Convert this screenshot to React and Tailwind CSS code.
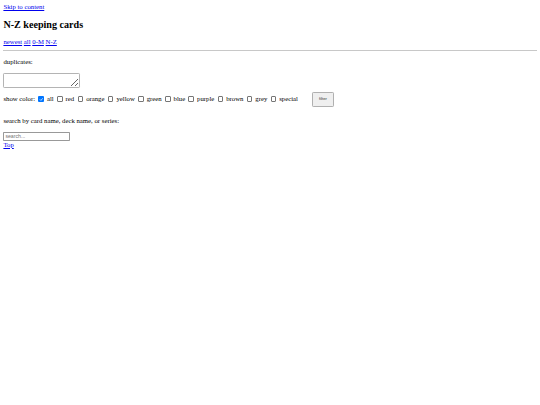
const Box = ({ checked }) =>
  checked ? (
    <span className="ml-[3.3px] mr-[3px] w-[5.6px] h-[5.6px] rounded-[1px] bg-[#0075ff] flex items-center justify-center">
      <svg viewBox="0 0 10 10" className="w-[4.6px] h-[4.6px]">
        <path d="M2 5.2 L4.2 7.4 L8.2 2.8" fill="none" stroke="#fff" strokeWidth="1.6" />
      </svg>
    </span>
  ) : (
    <span className="ml-[3.3px] mr-[3px] w-[5.6px] h-[5.6px] rounded-[1px] border-[0.6px] border-[#767676] bg-white" />
  );

export default function App() {
  const colors = ['red', 'orange', 'yellow', 'green', 'blue', 'purple', 'brown', 'grey', 'special'];
  return (
    <div className="min-h-[405px] bg-white p-[3.4px] text-[6.75px] leading-[7.8px] text-black font-['Liberation_Serif',serif]">
      <a href="#content" className="text-[#0000ee] underline">Skip to content</a>
      <h2 className="mt-[8.2px] mb-[7px] text-[10.125px] leading-[11.6px] font-bold">N-Z keeping cards</h2>
      <div>
        <a href="#" className="text-[#0000ee] underline">newest</a>{' '}
        <a href="#" className="text-[#0000ee] underline">all</a>{' '}
        <a href="#" className="text-[#0000ee] underline">0-M</a>{' '}
        <a href="#" className="text-[#0000ee] underline">N-Z</a>
      </div>
      <hr className="mt-[4.4px] mb-[3.4px] border-t-[1px] border-[#c8c8c8]" />
      <form id="content">
        <p className="my-[6.75px]">duplicates:</p>
        <textarea className="block mt-[7px] w-[77px] h-[15px] border-[0.6px] border-[#b4b4b4] rounded-[1.2px] bg-white resize" />
        <div className="mt-[4px] mb-[10px] flex items-center">
          <span>show color:</span>
          <Box checked />
          <span>all</span>
          {colors.map((c) => (
            <span key={c} className="flex items-center">
              <Box />
              <span>{c}</span>
            </span>
          ))}
          <button type="button" className="ml-[14px] w-[22px] h-[15px] text-[4.2px] bg-[#efefef] border-[0.6px] border-[#b0b0b0] rounded-[1.2px] font-['Liberation_Sans',sans-serif] text-[#333]">
            filter
          </button>
        </div>
        <p className="my-[6.75px]">search by card name, deck name, or series:</p>
        <input
          type="text"
          placeholder="search..."
          className="block mt-[7.5px] w-[67px] h-[8.5px] px-[1px] text-[5.2px] border-[0.6px] border-[#999] rounded-[0.8px] font-['Liberation_Sans',sans-serif] placeholder:text-[#757575]"
        />
      </form>
      <a href="#" className="text-[#0000ee] underline">Top</a>
    </div>
  );
}
